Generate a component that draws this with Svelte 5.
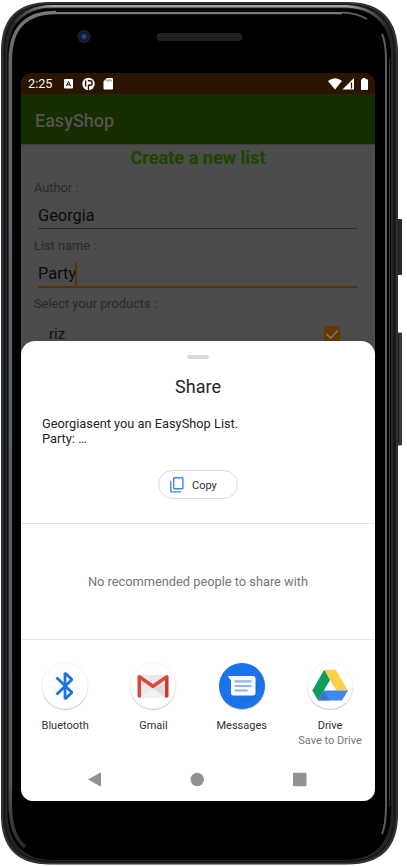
<script>
  const apps = [
    { id: 'bluetooth', name: 'Bluetooth' },
    { id: 'gmail', name: 'Gmail' },
    { id: 'messages', name: 'Messages' },
    { id: 'drive', name: 'Drive', note: 'Save to Drive' }
  ];
</script>

<div class="phone">
  <svg class="frame" width="407" height="867" viewBox="0 0 407 867">
    <defs>
      <linearGradient id="rim" x1="0" y1="0" x2="0" y2="1">
        <stop offset="0" stop-color="#77797d" />
        <stop offset=".05" stop-color="#65696e" />
        <stop offset=".5" stop-color="#59616a" />
        <stop offset=".92" stop-color="#555a61" />
        <stop offset="1" stop-color="#29292a" />
      </linearGradient>
      <radialGradient id="lens">
        <stop offset="0" stop-color="#4860a0" />
        <stop offset=".35" stop-color="#1c2b5a" />
        <stop offset=".65" stop-color="#111525" />
        <stop offset="1" stop-color="#25272a" />
      </radialGradient>
      <linearGradient id="topedge">
        <stop offset="0" stop-color="#303132" />
        <stop offset=".1" stop-color="#a0a2a3" />
        <stop offset=".9" stop-color="#a0a2a3" />
        <stop offset="1" stop-color="#303132" />
      </linearGradient>
      <pattern id="mesh" width="3" height="3" patternUnits="userSpaceOnUse">
        <rect width="3" height="3" fill="#1c1e1e" />
        <path d="M0 0h1v1H0zM2 2h1v1H2z" fill="#292b2b" />
      </pattern>
    </defs>
    <rect x="396" y="219" width="6" height="56" rx="1" fill="#292827" />
    <rect x="396" y="332.500" width="6" height="113" rx="1" fill="#383836" />
    <path d="M398.500 334v109M398.500 221v52" stroke="#181818" />
    <path d="M50 2H347Q398 2 398 54V814Q398 864.500 347 864.500H50Q1 864.500 1 815V51Q1 2 50 2Z" fill="#242424" />
    <path d="M50 3H347Q397 3 397 54V814Q397 863.500 347 863.500H50Q2 863.500 2 815V51Q2 3 50 3Z" fill="none" stroke="#3c3c3c" />
    <path d="M51 4.500H346Q394.500 4.500 394.500 54V814Q394.500 861.500 346 861.500H51Q4.500 861.500 4.500 814V52Q4.500 4.500 51 4.500Z" fill="none" stroke="#101010" />
    <path d="M15 23Q28 6.500 51 6.300H346Q372 7 384 25" fill="none" stroke="url(#topedge)" stroke-width="2.500" />
    <path d="M54 8.500H343Q391 8.500 391 57V810Q391 860 343 860H54Q7.500 860 7.500 810V57Q7.500 8.500 54 8.500Z" fill="#000" />
    <path d="M342 12.500H56Q10.300 12.500 10.300 60V805Q10.300 835 25 847" fill="none" stroke="url(#rim)" stroke-width="3.600" />
    <path d="M56 11.200H343" stroke="#000" stroke-width="1.500" />
    <path d="M342 12.500Q357 13 367 19M382 34Q386 42 386 61V805Q386 825 382 834" fill="none" stroke="#5b5b62" stroke-width="2" />
    <path d="M389.500 59V807" stroke="#303035" />
    <path d="M394.500 54V814" stroke="#151515" stroke-width="2" />
    <circle cx="84" cy="36.500" r="6.500" fill="url(#lens)" />
    <rect x="156.500" y="33" width="86" height="8" rx="4" fill="url(#mesh)" />
  </svg>

  <main class="screen">
    <header class="status">
      <span class="clock">2:25</span>
      <svg width="52" height="14" viewBox="0 0 52 14">
        <rect x="0" y="2" width="9" height="9.500" rx="1" fill="#fff" />
        <path d="M2.500 9L4.500 4.500 6.500 9M3.200 7.700h2.600" fill="none" stroke="#2b1502" stroke-width="1" />
        <circle cx="24.500" cy="7" r="6.200" fill="#fff" />
        <path d="M21.600 3.500V9.500M24.500 13.500V8.200H26a2.200 2.200 0 0 0 0-4.400H23.800" fill="none" stroke="#2b1502" stroke-width="1.400" />
        <path d="M42.800 1H48q1 0 1 1V11.500q0 1-1 1h-7.500q-1 0-1-1V4.500Z" fill="#fff" />
        <path d="M43 2.500v2M45 2.500v2M47 2.500v2" stroke="#2b1502" stroke-width=".7" />
      </svg>
      <svg class="signals" width="41" height="14" viewBox="0 0 41 14">
        <path d="M0 4Q7-1.500 14 4L7 12.500Z" fill="#fff" />
        <path d="M26 1V12.500H14.500Z" fill="#fff" />
        <path d="M23.500 5.500V11.500" stroke="#2b1502" stroke-width="1.200" />
        <path d="M34.500 1h3v1.300H39q1 0 1 1V12q0 1-1 1h-5q-1 0-1-1V3.300q0-1 1-1h.5Z" fill="#fff" />
      </svg>
    </header>
    <div class="appbar">EasyShop</div>
    <section class="form">
      <h1>Create a new list</h1>
      <div class="label">Author :</div>
      <div class="field">Georgia</div>
      <div class="label">List name :</div>
      <div class="field active">Party<i></i></div>
      <div class="label">Select your products :</div>
      <div class="product">
        <span>riz</span>
        <svg width="16" height="17" viewBox="0 0 16 17">
          <rect width="16" height="17" rx="1" fill="#643800" />
          <path d="M2.500 8l4 4L14 4.500" fill="none" stroke="#777" stroke-width="1.600" />
        </svg>
      </div>
    </section>

    <section class="sheet">
      <div class="handle"></div>
      <h2>Share</h2>
      <p class="preview">Georgiasent you an EasyShop List.<br />Party: …</p>
      <div class="copyrow">
        <button>
          <svg width="14" height="16" viewBox="0 0 14 16" fill="none" stroke="#4285f4" stroke-width="1.400">
            <rect x="3.700" y=".8" width="9.200" height="11" rx=".5" />
            <path d="M.8 4v10.200q0 .7.700.7H11" />
          </svg>
          <span>Copy</span>
        </button>
      </div>
      <div class="people">No recommended people to share with</div>
      <div class="apps">
        {#each apps as app (app.id)}
          <div class="app">
            <div class="icon {app.id}">
              {#if app.id === 'bluetooth'}
                <svg width="46" height="46" viewBox="0 0 46 46">
                  <path d="M14.500 14.500L30 29.500 23 36V10L30 16.500 14.500 31.500" fill="none" stroke="#1a73e8" stroke-width="2.800" stroke-linejoin="bevel" />
                </svg>
              {:else if app.id === 'gmail'}
                <svg width="46" height="46" viewBox="0 0 46 46">
                  <rect x="8" y="12" width="30" height="22.500" rx="1.500" fill="#e9e9e9" />
                  <path d="M10 34.500L23 24.500 36 34.500Z" fill="#f1f1f1" />
                  <path d="M35 20V34.500L23 25Z" fill="#dcdcdc" />
                  <path d="M11 15.500V34.500H9q-1.500 0-1.500-1.500V14Z" fill="#d54b3d" />
                  <path d="M35 15.500V34.500h2q1.500 0 1.500-1.500V14Z" fill="#c53a2f" />
                  <path d="M9.200 13.800L23 23.300 36.800 13.800" fill="none" stroke="#dc4b3f" stroke-width="3.500" stroke-linecap="round" />
                </svg>
              {:else if app.id === 'messages'}
                <svg width="46" height="46" viewBox="0 0 46 46">
                  <path d="M13 31L21 38Q25 38 36 31L36 18 39 21Q40 34 32 38H21Z" fill="#1765cc" opacity=".4" />
                  <path d="M8.700 13H34q2.500 0 2.500 2.500v14.500q0 2.500-2.500 2.500H14.500Q12 32.500 12 30V17.500Z" fill="#fff" />
                  <path d="M16.300 18.400H31.700M16.300 23H31.700M16.300 27.500H27.800" stroke="#8ab4f8" stroke-width="2.200" stroke-linecap="round" />
                </svg>
              {:else}
                <svg width="46" height="46" viewBox="0 0 46 46">
                  <path d="M17.200 6.700H28.800L41 27.500H29.500Z" fill="#ffcf48" />
                  <path d="M17.200 6.700L23 17 11 37.500 5.300 27.500Z" fill="#0f9d58" />
                  <path d="M16.800 27.500H41L35 37.500H11Z" fill="#4285f4" />
                  <path d="M16.800 27.500L22.500 37.500H11Z" fill="#3768c9" opacity=".65" />
                </svg>
              {/if}
            </div>
            <b>{app.name}</b>
            {#if app.note}<small>{app.note}</small>{/if}
          </div>
        {/each}
      </div>
      <nav>
        <svg width="13" height="16" viewBox="0 0 13 16"><path d="M0 7.500L12 .7Q13 .3 13 1V14q0 .8-1 .3Z" fill="#929292" /></svg>
        <svg width="14" height="16" viewBox="0 0 14 16"><circle cx="7.200" cy="7.500" r="6.700" fill="#929292" /></svg>
        <svg width="14" height="16" viewBox="0 0 14 16"><rect y=".8" width="13.500" height="13.500" rx="1" fill="#929292" /></svg>
      </nav>
    </section>
  </main>
</div>

<style>
  :global(body) { background: #fff; }
  .phone {
    position: relative;
    box-sizing: border-box;
    width: 407px;
    height: 867px;
    padding: 73px 0 0 21px;
    overflow: hidden;
    font-family: Roboto, sans-serif;
  }
  .frame { position: absolute; top: 0; left: 0; }
  .screen {
    position: relative;
    width: 354px;
    height: 728px;
    overflow: hidden;
    border-radius: 12px;
    background: #4b4b4b;
  }
  .status {
    display: flex;
    align-items: center;
    box-sizing: border-box;
    height: 21px;
    padding: 0 6px 0 7px;
    background: #2b1502;
  }
  .clock { width: 36px; color: #f4f2f0; font-size: 12.700px; line-height: 22px; }
  .signals { margin-left: auto; }
  .appbar {
    box-sizing: border-box;
    height: 50px;
    padding-left: 14px;
    background: #162d00;
    color: #535353;
    font-size: 18px;
    font-weight: 500;
    line-height: 54px;
  }
  .form { border-top: 1px solid #3b3f38; }
  h1 {
    margin: 0;
    height: 27px;
    color: #1c4500;
    font-size: 18.100px;
    font-weight: 700;
    line-height: 25px;
    text-align: center;
  }
  .label {
    height: 32px;
    padding-left: 13px;
    color: #292929;
    font-size: 12.800px;
    line-height: 32px;
  }
  .field {
    display: flex;
    align-items: center;
    box-sizing: border-box;
    height: 25px;
    margin: 0 18px 1px 17px;
    border-bottom: 1px solid #292929;
    color: #0c0c0c;
    font-size: 16.400px;
    line-height: 26px;
  }
  .active { height: 26px; margin-bottom: 0; border-bottom: 2px solid #5a3200; }
  .field i { width: 1.500px; height: 22px; margin-left: -1px; background: #5a3200; }
  .product {
    display: flex;
    justify-content: space-between;
    align-items: center;
    height: 28px;
    padding: 0 35px 0 28px;
    color: #111;
    font-size: 15px;
  }
  .sheet {
    position: absolute;
    left: 0;
    right: 0;
    bottom: 0;
    height: 460px;
    border-radius: 14px 14px 0 0;
    background: #fff;
  }
  .handle {
    width: 22px;
    height: 4px;
    margin: 14px auto 0;
    border-radius: 2px;
    background: #dadada;
  }
  h2 {
    margin: 12px 0 0;
    color: #252525;
    font-size: 18px;
    font-weight: 400;
    line-height: 32px;
    text-align: center;
  }
  .preview {
    margin: 13px 0 0 21px;
    color: #252525;
    font-size: 12.800px;
    line-height: 15px;
  }
  .copyrow {
    display: flex;
    justify-content: center;
    box-sizing: border-box;
    height: 78px;
    padding-top: 24px;
    border-bottom: 1px solid #e3e3e3;
  }
  button {
    display: flex;
    align-items: center;
    gap: 8px;
    box-sizing: border-box;
    width: 80px;
    height: 29px;
    padding: 0 0 0 11px;
    border: 1px solid #dcdcdc;
    border-radius: 15px;
    background: #fff;
    color: #303030;
    font: 11px Roboto, sans-serif;
  }
  button span { padding-top: 2px; }
  .people {
    height: 115px;
    border-bottom: 1px solid #e6e6e6;
    color: #767676;
    font-size: 12.800px;
    line-height: 116px;
    text-align: center;
  }
  .apps { display: flex; height: 126px; padding-top: 23px; box-sizing: border-box; }
  .app { display: flex; flex-direction: column; align-items: center; width: 88.300px; }
  .icon {
    width: 46px;
    height: 46px;
    border-radius: 50%;
    background: #fff;
    box-shadow: 0 1px 1px rgba(0, 0, 0, .22), 0 0 1px rgba(0, 0, 0, .12);
  }
  .messages { background: #1a73e8; }
  .icon svg { display: block; }
  b { margin-top: 9px; color: #303030; font-size: 11px; font-weight: 400; line-height: 15px; }
  small { color: #757575; font-size: 11px; line-height: 15px; white-space: nowrap; }
  nav { display: flex; justify-content: space-between; padding: 6px 68px 0 67px; }
</style>
